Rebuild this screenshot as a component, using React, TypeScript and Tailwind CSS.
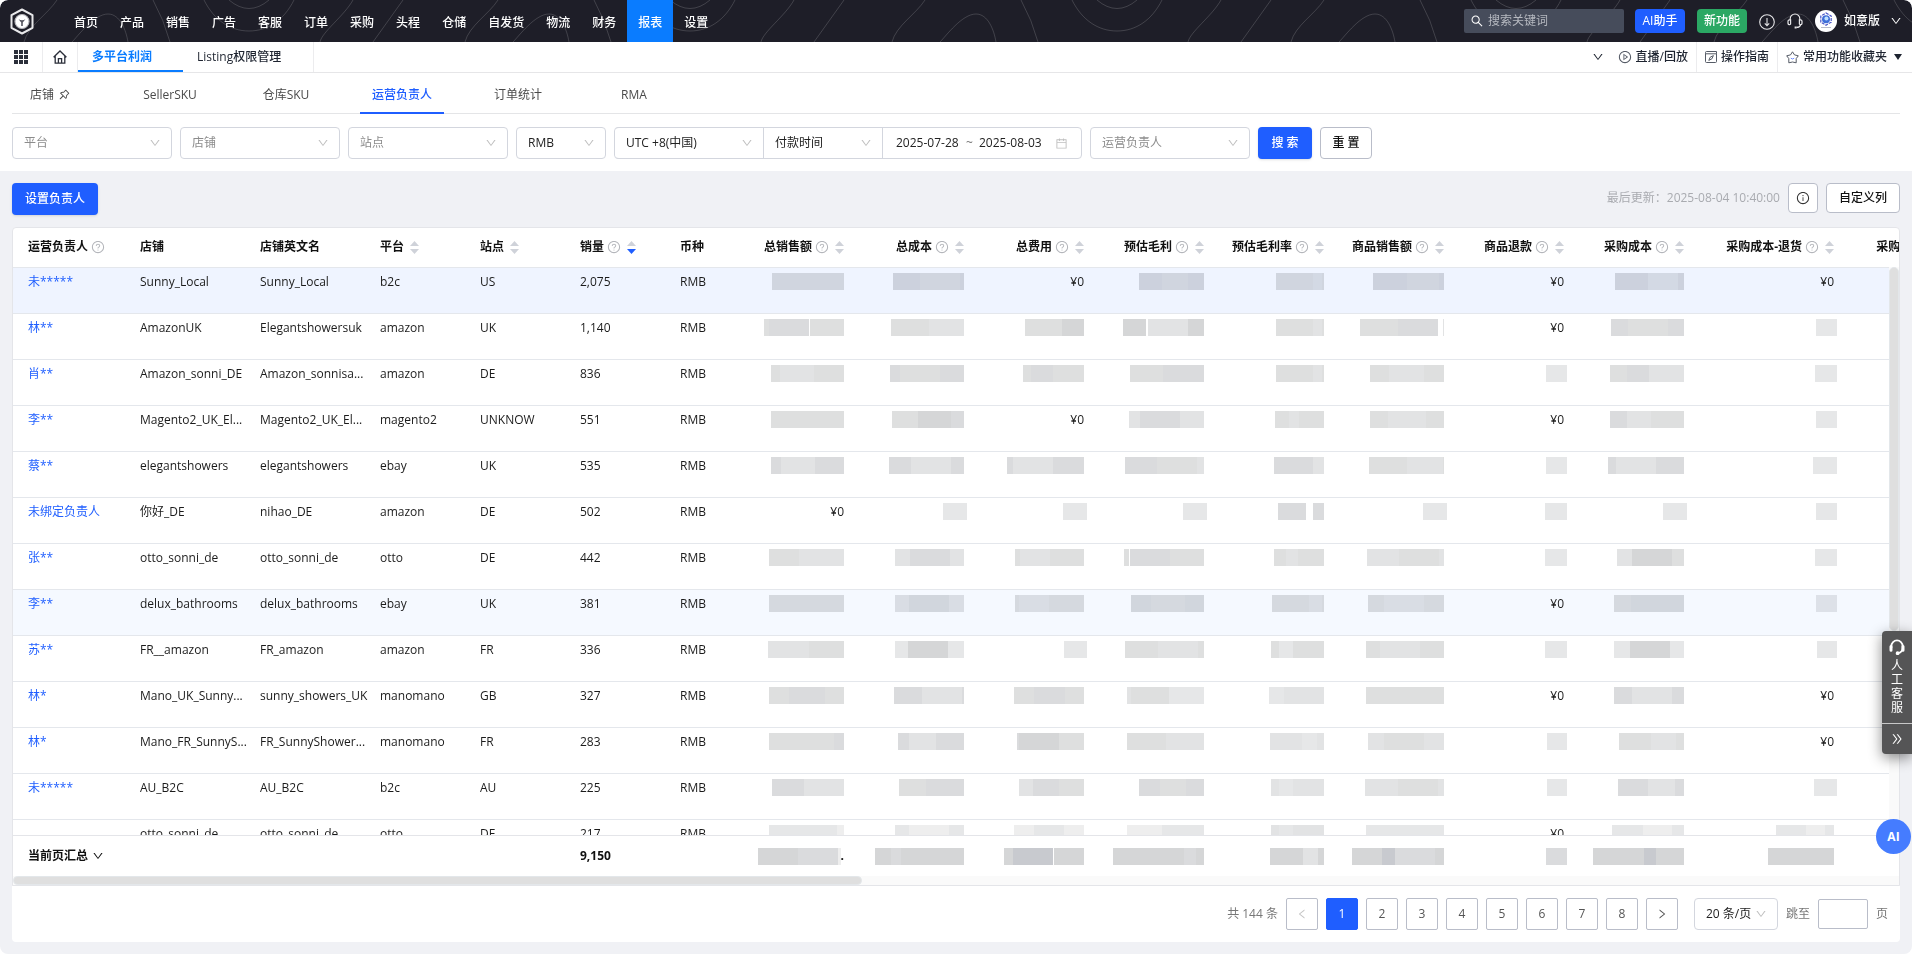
import { useState } from 'react'
import type { ReactNode } from 'react'
import {
  AiOutlineCalendar,
  AiOutlineDoubleRight,
  AiOutlineDown,
  AiOutlineInfoCircle,
  AiOutlineLeft,
  AiOutlinePlayCircle,
  AiOutlinePushpin,
  AiOutlineQuestionCircle,
  AiOutlineRight,
  AiOutlineSearch,
} from 'react-icons/ai'

const NAV = ['首页', '产品', '销售', '广告', '客服', '订单', '采购', '头程', '仓储', '自发货', '物流', '财务', '报表', '设置']

const TABS = ['SellerSKU', '仓库SKU', '运营负责人', '订单统计', 'RMA']

type Column = { title: string; width: number; help?: boolean; sort?: boolean; desc?: boolean; right?: boolean }

const COLUMNS: Column[] = [
  { title: '运营负责人', width: 115, help: true },
  { title: '店铺', width: 120 },
  { title: '店铺英文名', width: 120 },
  { title: '平台', width: 100, sort: true },
  { title: '站点', width: 100, sort: true },
  { title: '销量', width: 100, help: true, sort: true, desc: true },
  { title: '币种', width: 68 },
  { title: '总销售额', width: 120, help: true, sort: true, right: true },
  { title: '总成本', width: 120, help: true, sort: true, right: true },
  { title: '总费用', width: 120, help: true, sort: true, right: true },
  { title: '预估毛利', width: 120, help: true, sort: true, right: true },
  { title: '预估毛利率', width: 120, help: true, sort: true, right: true },
  { title: '商品销售额', width: 120, help: true, sort: true, right: true },
  { title: '商品退款', width: 120, help: true, sort: true, right: true },
  { title: '采购成本', width: 120, help: true, sort: true, right: true },
  { title: '采购成本-退货', width: 150, help: true, sort: true, right: true },
  { title: '采购运费-退货', width: 150, help: true, sort: true, right: true },
]

// Hidden amounts are runs of "<shade><width>", "-" is a gap.
const SHADES: Record<string, string> = {
  a: 'bg-[#d5d6d7]',
  b: 'bg-[#dadbdd]',
  c: 'bg-[#dedfdf]',
  d: 'bg-[#e2e3e4]',
  e: 'bg-[#e6e7e8]',
  f: 'bg-[#eeeeee]',
  g: 'bg-[#c8cacf]',
  '-': '',
}

type Row = { owner: string; info: string[]; amounts: string[] }

const ROWS: Row[] = [
  {
    owner: '未*****',
    info: ['Sunny_Local', 'Sunny_Local', 'b2c', 'US', '2,075'],
    amounts: ['c72', 'b27 c40 b4', '¥0', 'b23 c26 b16', 'c37 d9 c2', 'b34 c32 b5', '¥0', 'b33 d30 b6', '¥0'],
  },
  {
    owner: '林**',
    info: ['AmazonUK', 'Elegantshowersuk', 'amazon', 'UK', '1,140'],
    amounts: ['c5 b40 -1 c34', 'c38 d35', 'c37 a22', 'a23 -2 d40 a16', 'c37 d9 c2', 'c38 b40 -5 d1', '¥0', 'b17 c40 b16', 'e21'],
  },
  {
    owner: '肖**',
    info: ['Amazon_sonni_DE', 'Amazon_sonnisa...', 'amazon', 'DE', '836'],
    amounts: ['c9 d34 c30', 'b10 c40 b24', 'c8 b22 c31', 'c33 b41', 'c37 d9 c2', 'c19 d35 c20', 'e21', 'c17 b22 d35', 'e22'],
  },
  {
    owner: '李**',
    info: ['Magento2_UK_El...', 'Magento2_UK_El...', 'magento2', 'UNKNOW', '551'],
    amounts: ['c73', 'c26 a33 b13', '¥0', 'd11 b40 d24', 'c14 d10 c25', 'c18 d38 c18', '¥0', 'b17 d24 c33', 'e21'],
  },
  {
    owner: '蔡**',
    info: ['elegantshowers', 'elegantshowers', 'ebay', 'UK', '535'],
    amounts: ['b10 d34 b29', 'b22 d40 b13', 'b6 d40 b31', 'b32 c40 d7', 'b39 d11', 'c38 d36 c1', 'e21', 'b8 d40 b28', 'e24'],
  },
  {
    owner: '未绑定负责人',
    info: ['你好_DE', 'nihao_DE', 'amazon', 'DE', '502'],
    amounts: ['¥0', 'e24', 'e24', 'e24', 'b28 -7 b11', 'e24', 'e22', 'e24', 'e21'],
  },
  {
    owner: '张**',
    info: ['otto_sonni_de', 'otto_sonni_de', 'otto', 'DE', '442'],
    amounts: ['c30 d45', 'd15 b40 d14', 'c5 d30 c34', 'c5 -1 b40 c34', 'c12 d12 c26', 'd32 c40 d5', 'e22', 'd15 a40 c12', 'e22'],
  },
  {
    owner: '李**',
    info: ['delux_bathrooms', 'delux_bathrooms', 'ebay', 'UK', '381'],
    amounts: ['c75', 'd14 b40 d15', 'c4 d30 c35', 'b20 c34 b19', 'c37 d13 c2', 'c16 d40 c20', '¥0', 'c17 b53', 'e21'],
  },
  {
    owner: '苏**',
    info: ['FR__amazon', 'FR_amazon', 'amazon', 'FR', '336'],
    amounts: ['d41 c35', 'e13 a40 e16', 'e23', 'c33 d40 c6', 'c8 e14 c31', 'c14 d40 c24', 'e22', 'e16 a40 e14', 'e20'],
  },
  {
    owner: '林*',
    info: ['Mano_UK_Sunny...', 'sunny_showers_UK', 'manomano', 'GB', '327'],
    amounts: ['c20 b36 c19', 'b28 d40 b2', 'c20 b31 c19', 'd4 c38 e35', 'e15 d40', 'c78', '¥0', 'b18 d40 b12', '¥0'],
  },
  {
    owner: '林*',
    info: ['Mano_FR_SunnyS...', 'FR_SunnyShower...', 'manomano', 'FR', '283'],
    amounts: ['c65 b10', 'b11 d27 b28', 'b2 a40 c25', 'c39 d38', 'd32 e15 d7', 'd16 c40 d20', 'e20', 'c32 d25 c8', '¥0'],
  },
  {
    owner: '未*****',
    info: ['AU_B2C', 'AU_B2C', 'b2c', 'AU', '225'],
    amounts: ['b32 d40', 'c27 b38', 'd14 b26 c25', 'b21 c26 b18', 'd8 e14 d31', 'd33 c40 d6', 'e20', 'b30 d27 b9', 'e23'],
  },
  {
    owner: '',
    info: ['otto_sonni_de', 'otto_sonni_de', 'otto', 'DE', '217'],
    amounts: ['e68 f7', 'e14 f40 e15', 'f20 e30 f20', 'f35 e42', 'd8 e14 d31', 'e78', '¥0', 'e31 f29 e12', 'e30 f19 e9'],
  },
]

const TOTALS = ['a40 b40 f3', 'a16 b10 a63', 'a9 g40 -1 a30', 'a31 a40 b12 a8', 'a33 d15 a6', 'a30 g13 b40 a9', 'b21', 'a51 g12 a28', 'a66']

// Start of each repeat of the contour lines in the top bar.
const WAVES = [0, 441, 868, 1267, 1690]

function Amount({ value }: { value: string }) {
  if (value.startsWith('¥')) return <>{value}</>
  const parts = value.split(' ')
  const narrow = parts.length === 1 && Number(value.slice(1)) < 30
  return (
    <div className={`flex h-[17px] justify-end mix-blend-multiply ${narrow ? '-mr-[3px]' : ''}`}>
      {parts.map((part, i) => (
        <span key={i} className={SHADES[part[0]]} style={{ width: Number(part.slice(1)) }} />
      ))}
    </div>
  )
}

function Cols() {
  return (
    <colgroup>
      {COLUMNS.map((col) => (
        <col key={col.title} style={{ width: col.width }} />
      ))}
    </colgroup>
  )
}

function Select({ label, value, className, muted }: { label: string; value: string; className: string; muted?: boolean }) {
  return (
    <div className={`relative h-8 bg-white ${className}`}>
      <select
        aria-label={label}
        className={`h-full w-full appearance-none bg-transparent pr-6 pl-[11px] outline-none ${muted ? 'text-[#8c8c8c]' : 'text-[#222]'}`}>
        <option>{value}</option>
      </select>
      <AiOutlineDown className="pointer-events-none absolute top-[9px] right-[10px] size-3 text-[#bfbfbf]" />
    </div>
  )
}

function Logo() {
  return (
    <svg viewBox="0 0 24 27" className="h-[27px] w-6" fill="none">
      <path d="M12 1.5 22.5 7.2V19.8L12 25.5 1.5 19.8V7.2Z" stroke="#e8e8ea" strokeWidth="2" strokeLinejoin="round" />
      <circle cx="12" cy="13.5" r="7" fill="#fff" />
      <circle cx="12" cy="13.5" r="7" stroke="#b9b9be" strokeWidth="1.2" />
      <path d="M8.6 11.2Q12 13.2 15.4 11.2L12.8 14.6V18H11.2V14.6Z" fill="#55555f" />
    </svg>
  )
}

function Waves() {
  return (
    <svg className="absolute inset-0 h-full w-full" fill="none" stroke="#fff" strokeOpacity="0.16" strokeWidth="1">
      {WAVES.map((x) => (
        <g key={x} transform={`translate(${x} 0)`}>
          <path d="M57 0C48 14 28 26 24 42" />
          <path d="M72 42C78 36 94 14 108 14 120 14 126 30 128 42" />
          <path d="M153 0Q164 20 170 42" />
          <path d="M204 0C214 20 230 31 249 31S284 20 294 0" />
          <path d="M229 0Q249 17 269 0" />
          <path d="M353 0C344 16 322 32 320 42" />
          <path d="M403 0 373 42" />
        </g>
      ))}
    </svg>
  )
}

function TopBar() {
  return (
    <header className="relative flex h-[42px] shrink-0 items-center overflow-hidden rounded-t-lg bg-[#1e1e28] text-white">
      <Waves />
      <a href="#home" aria-label="首页" className="relative flex w-[63px] pl-[10px]">
        <Logo />
      </a>
      <nav className="relative flex h-full">
        {NAV.map((item) => (
          <a
            key={item}
            href={`#${item}`}
            className={`flex h-full items-center px-[11px] pt-[3px] font-medium ${item === '报表' ? 'bg-[#0a7cff]' : ''}`}>
            {item}
          </a>
        ))}
      </nav>
      <div className="relative ml-auto flex items-center pr-[10px]">
        <label className="flex h-6 w-40 items-center gap-1 rounded-xs bg-[#464c5b] pl-1.5">
          <AiOutlineSearch className="size-[14px]" />
          <input aria-label="搜索" placeholder="搜索关键词" className="w-32 bg-transparent outline-none placeholder:text-[#b6b9c0]" />
        </label>
        <button className="ml-[11px] h-6 w-[50px] rounded bg-[#1f5eff] font-medium">AI助手</button>
        <button className="ml-3 h-6 w-[50px] rounded bg-[#2ba864] font-medium">新功能</button>
        <button aria-label="下载" className="ml-3">
          <svg viewBox="0 0 16 16" className="mt-px size-4" fill="none" stroke="#e6e6e8" strokeWidth="1.1">
            <circle cx="8" cy="8" r="7.3" />
            <path d="M8 4v7.5M5.8 9.4 8 11.8l2.2-2.4" />
          </svg>
        </button>
        <button aria-label="客服" className="ml-3">
          <svg viewBox="0 0 16 16" className="size-4" fill="none" stroke="#e6e6e8" strokeWidth="1.2">
            <path d="M3.2 7V5.8a4.8 4.8 0 0 1 9.6 0V7" />
            <path d="M3.6 6.8H2.6a1.6 1.6 0 0 0-1.6 1.6v2a1.4 1.4 0 0 0 2.6.6Z" />
            <path d="M12.4 6.8h1a1.6 1.6 0 0 1 1.6 1.6v2a1.4 1.4 0 0 1-2.6.6Z" />
            <path d="M13.6 11.8C13.2 13.6 11.6 14.4 9.4 14.4" />
            <path d="M7.6 14.4h2" strokeWidth="2" />
          </svg>
        </button>
        <svg viewBox="0 0 22 22" className="ml-3 size-[22px]">
          <circle cx="11" cy="11" r="11" fill="#fff" />
          <path d="M11 3 16.2 6V12.2L11 15.2 5.8 12.2V6Z" fill="none" stroke="#4a56c8" strokeWidth="1.2" strokeDasharray="3 1" />
          <circle cx="11" cy="9.2" r="4" fill="#3f6fd8" />
          <circle cx="11.4" cy="8.6" r="2" fill="#bfe2ff" />
          <path d="M6 17.5h10" stroke="#b9bccb" strokeWidth="1" />
        </svg>
        <button className="ml-[7px] flex items-center font-medium">
          如意版
          <AiOutlineDown className="ml-[10px] size-3" />
        </button>
      </div>
    </header>
  )
}

function PageTabs() {
  return (
    <div className="flex h-[31px] shrink-0 items-stretch border-b border-[#e6e6e8] bg-white text-[#1e2430]">
      <button aria-label="全部功能" className="flex w-[43px] items-center justify-center border-r border-[#ececee]">
        <svg viewBox="0 0 14 14" className="size-[14px]" fill="#2b2f3a">
          {[0, 5, 10].map((y) => [0, 5, 10].map((x) => <rect key={`${x}-${y}`} x={x} y={y} width="4" height="4" />))}
        </svg>
      </button>
      <button aria-label="主页" className="flex w-[35px] items-center justify-center border-r border-[#ececee]">
        <svg viewBox="0 0 14 14" className="size-[14px]" fill="none" stroke="#2b2f3a" strokeWidth="1.3">
          <path d="M.6 7.2 7 1l6.4 6.2M2.2 6v7.2h9.6V6M5.4 13V8.6h3.2V13" />
        </svg>
      </button>
      <a href="#profit" className="flex w-[105px] items-center border-b-2 border-[#0a7cff] pt-0.5 pl-[14px] font-bold text-[#0a7cff]">
        多平台利润
      </a>
      <a href="#listing" className="flex w-[131px] items-center border-r border-[#ececee] pl-[14px] font-medium">
        Listing权限管理
      </a>
      <div className="ml-auto flex items-center font-medium">
        <AiOutlineDown className="size-3" />
        <a href="#live" className="ml-[14px] flex h-full items-center gap-1 border-r border-[#ececee] pr-2">
          <AiOutlinePlayCircle className="size-[14px] text-[#555b66]" />
          直播/回放
        </a>
        <a href="#guide" className="flex h-full items-center gap-1 border-r border-[#ececee] px-2">
          <svg viewBox="0 0 12 12" className="size-3" fill="none" stroke="#555b66">
            <path d="M.5 2.8V10.5a1 1 0 0 0 1 1h9a1 1 0 0 0 1-1V2.8M.5 2.8h11V.5h-10a1 1 0 0 0-1 1Z" />
            <path d="M8.4 4.6 6.9 7.8 3.8 9.4 5.2 6.2Z" />
          </svg>
          操作指南
        </a>
        <button className="flex h-full items-center gap-1 pr-[10px] pl-2">
          <svg viewBox="0 0 13 13" className="size-[13px]" fill="none" stroke="#555b66">
            <path d="M6.5.8 8.5 3.9 12.3 4.8 10.2 7.6V11.8L6.5 11 2.8 11.8V7.6L.7 4.8 4.5 3.9Z" />
            <path d="M4.8 7.2Q6.5 8.8 8.2 7.2" stroke="#6d8bff" />
          </svg>
          常用功能收藏夹
          <svg viewBox="0 0 8 6" className="ml-[3px] h-1.5 w-2" fill="#1e2430">
            <path d="M0 0h8L4 6Z" />
          </svg>
        </button>
      </div>
    </div>
  )
}

function ReportTabs() {
  return (
    <nav className="mx-3 flex h-[41px] shrink-0 border-b border-[#e4e5e7] text-[#4a4a4a]">
      <a href="#shop" className="flex w-[100px] items-center gap-1 pt-[3px] pl-[18px]">
        店铺
        <AiOutlinePushpin className="size-[13px]" />
      </a>
      {TABS.map((tab) => (
        <a key={tab} href={`#${tab}`} className="flex w-[116px] justify-center">
          <span
            className={`-mb-px flex items-center border-b-2 px-3 pt-[5px] ${
              tab === '运营负责人' ? 'border-[#1f5eff] font-medium text-[#1f5eff]' : 'border-transparent'
            }`}>
            {tab}
          </span>
        </a>
      ))}
    </nav>
  )
}

function Filters() {
  return (
    <form className="flex items-center gap-2 px-3 pt-[13px] pb-3" onSubmit={(e) => e.preventDefault()}>
      <Select label="平台" value="平台" muted className="w-40 rounded border border-[#d3d6de]" />
      <Select label="店铺" value="店铺" muted className="w-40 rounded border border-[#d3d6de]" />
      <Select label="站点" value="站点" muted className="w-40 rounded border border-[#d3d6de]" />
      <Select label="币种" value="RMB" className="w-[90px] rounded border border-[#d3d6de]" />
      <div className="flex h-8 rounded border border-[#d3d6de]">
        <Select label="时区" value="UTC +8(中国)" className="-my-px w-[149px] border-y border-r border-[#d3d6de] first:rounded-l" />
        <Select label="时间类型" value="付款时间" className="-my-px w-[119px] border-y border-r border-[#d3d6de]" />
        <div className="flex w-[198px] items-center pl-[13px] text-[#222]">
          <input aria-label="开始日期" defaultValue="2025-07-28" className="w-[70px] outline-none" />
          <span className="w-[13px] text-[#777]">~</span>
          <input aria-label="结束日期" defaultValue="2025-08-03" className="w-[76px] outline-none" />
          <AiOutlineCalendar className="size-[13px] text-[#bfbfbf]" />
        </div>
      </div>
      <Select label="运营负责人" value="运营负责人" muted className="w-40 rounded border border-[#d3d6de]" />
      <button type="submit" className="h-8 w-[54px] rounded bg-[#1f5eff] font-medium text-white shadow-sm">搜 索</button>
      <button type="reset" className="h-8 w-[52px] rounded border border-[#b9bdc9] bg-white font-medium text-[#111]">重 置</button>
    </form>
  )
}

function HeadCell({ col }: { col: Column }) {
  return (
    <th className="p-0 px-3 font-bold first:pl-[15px]">
      <div className={`flex items-center whitespace-nowrap ${col.right ? 'justify-end' : ''}`}>
        {col.title}
        {col.help && <AiOutlineQuestionCircle className="ml-[3px] size-[14px] shrink-0 text-[#b4b6bb]" />}
        {col.sort && (
          <button aria-label={`${col.title}排序`} className="ml-1.5">
            <svg viewBox="0 0 9 13" className="h-[13px] w-[9px]" fill="#cfd2d9">
              <path d="M4.5 0 9 5H0Z" />
              <path d="M0 8h9L4.5 13Z" fill={col.desc ? '#1f5eff' : undefined} />
            </svg>
          </button>
        )}
      </div>
    </th>
  )
}

function ReportTable() {
  return (
    <section className="relative flex min-h-0 flex-1 flex-col overflow-hidden rounded-t border border-[#e4e5e9] bg-white text-[#1b1b1b]">
      <div className="min-h-0 flex-1 overflow-hidden">
        <table className="w-[1983px] table-fixed border-collapse text-left">
          <Cols />
          <thead>
            <tr className="h-[39px] border-b border-[#e4e7ec] text-[#111]">
              {COLUMNS.map((col) => (
                <HeadCell key={col.title} col={col} />
              ))}
            </tr>
          </thead>
          <tbody>
            {ROWS.map((row, i) => (
              <tr
                key={i}
                className={`h-[46px] border-b border-[#e4e7ec] align-top leading-[18px] whitespace-nowrap ${
                  i === 0 ? 'bg-[#eff4ff]' : i === 7 ? 'bg-[#f5f9ff]' : ''
                }`}>
                <td className="pt-[5px] pl-[15px]">
                  {row.owner && <a href="#owner" className="text-[#1f5eff]">{row.owner}</a>}
                </td>
                {row.info.map((text, j) => (
                  <td key={j} className="pt-[5px] pl-3">{text}</td>
                ))}
                <td className="pt-[5px] pl-3">RMB</td>
                {row.amounts.map((value, j) => (
                  <td key={j} className="px-3 pt-[5px] text-right">
                    <Amount value={value} />
                  </td>
                ))}
                <td />
              </tr>
            ))}
          </tbody>
        </table>
      </div>

      {/* Vertical scrollbar */}
      <div className="absolute top-[39px] right-0 bottom-[50px] w-[10px] bg-[#fafafa]">
        <div className="h-[64%] rounded-full border border-[#e3e7ea] bg-[#dfdfdf]" />
      </div>

      <div className="relative overflow-hidden border-t border-[#e4e5e9] bg-white">
        <table className="w-[1983px] table-fixed text-left">
          <Cols />
          <tbody>
            <tr className="h-10 font-bold text-[#111]">
              <td colSpan={5} className="pl-[15px]">
                <button className="flex items-center gap-1">
                  当前页汇总
                  <AiOutlineDown className="size-3" />
                </button>
              </td>
              <td className="pl-3">9,150</td>
              <td />
              {TOTALS.map((value, j) => (
                <td key={j} className="px-3">
                  <div className="flex items-center justify-end">
                    <Amount value={value} />
                    {j === 0 && <span className="leading-4">.</span>}
                  </div>
                </td>
              ))}
              <td />
            </tr>
          </tbody>
        </table>
        <div className="h-[9px] bg-[#fafafa]">
          <div className="h-full w-[45%] rounded-full border border-[#e3e7ea] bg-[#dfdfdf]" />
        </div>
      </div>
    </section>
  )
}

function PageButton({ children, label, active, onClick }: { children: ReactNode; label?: string; active?: boolean; onClick?: () => void }) {
  return (
    <button
      aria-label={label}
      onClick={onClick}
      className={`flex size-8 items-center justify-center rounded-xs border ${
        active ? 'border-[#1f5eff] bg-[#1f5eff] text-white' : 'border-[#b9bdc9] bg-white text-[#555]'
      }`}>
      {children}
    </button>
  )
}

function Pagination() {
  const [page, setPage] = useState(1)
  return (
    <footer className="flex h-14 shrink-0 items-center justify-end gap-2 rounded-b bg-white pr-3 text-[#777]">
      <span>共 144 条</span>
      <PageButton label="上一页" onClick={() => setPage(Math.max(1, page - 1))}>
        <AiOutlineLeft className="size-3 text-[#c4c4c4]" />
      </PageButton>
      {[1, 2, 3, 4, 5, 6, 7, 8].map((n) => (
        <PageButton key={n} active={n === page} onClick={() => setPage(n)}>
          {n}
        </PageButton>
      ))}
      <PageButton label="下一页" onClick={() => setPage(Math.min(8, page + 1))}>
        <AiOutlineRight className="size-3" />
      </PageButton>
      <Select label="每页条数" value="20 条/页" className="ml-2 w-[84px] rounded border border-[#d3d6de]" />
      <label className="flex items-center gap-2">
        跳至
        <input className="h-[30px] w-[50px] rounded-xs border border-[#b9bdc9] px-2 outline-none" />
        页
      </label>
    </footer>
  )
}

export default function App() {
  return (
    <div className="h-screen bg-white font-['Open_Sans','Noto_Sans_CJK_SC',sans-serif] text-xs">
      <div className="flex h-full flex-col overflow-hidden rounded-lg bg-[#f0f1f5]">
        <TopBar />
        <PageTabs />
        <div className="shrink-0 bg-white">
          <ReportTabs />
          <Filters />
        </div>

        <main className="flex min-h-0 flex-1 flex-col px-3 pt-3 pb-3">
          <div className="mb-3 flex shrink-0 items-start gap-2">
            <button className="h-8 w-[86px] rounded bg-[#1f5eff] font-medium text-white shadow-sm">设置负责人</button>
            <div className="ml-auto flex items-center gap-2">
              <span className="text-[#a9abb0]">最后更新：2025-08-04 10:40:00</span>
              <button aria-label="说明" className="flex size-[30px] items-center justify-center rounded border border-[#b9bdc9] bg-white">
                <AiOutlineInfoCircle className="size-[14px] text-[#333]" />
              </button>
              <button className="h-[30px] w-[74px] rounded border border-[#b9bdc9] bg-white font-medium text-[#111]">自定义列</button>
            </div>
          </div>
          <ReportTable />
          <Pagination />
        </main>
      </div>

      {/* Floating support widget */}
      <aside className="fixed right-0 bottom-[200px] flex w-[30px] flex-col items-center rounded-l bg-[#555556] text-white shadow-[0_4px_14px_rgba(0,0,0,0.45)]">
        <button className="flex flex-col items-center pt-2 pb-2">
          <svg viewBox="0 0 16 16" className="size-4" fill="none" stroke="#fff" strokeWidth="1.8">
            <path d="M2.4 9V7a5.6 5.6 0 0 1 11.2 0v2c0 2.6-1.6 4.4-4.4 5.2" />
            <path d="M2 7.6v3.6M14 7.6v3.6" strokeWidth="3" strokeLinecap="round" />
            <circle cx="8.6" cy="14.2" r="1" fill="#fff" />
          </svg>
          <span className="mt-1 w-3 leading-[14px]">人工客服</span>
        </button>
        <button aria-label="收起" className="flex h-[31px] w-full items-center justify-center border-t border-[#c8c8c8]">
          <AiOutlineDoubleRight className="size-[14px]" />
        </button>
      </aside>
      <button className="fixed right-px bottom-[100px] size-[35px] rounded-full bg-[#457cff] font-bold text-white">AI</button>
    </div>
  )
}
